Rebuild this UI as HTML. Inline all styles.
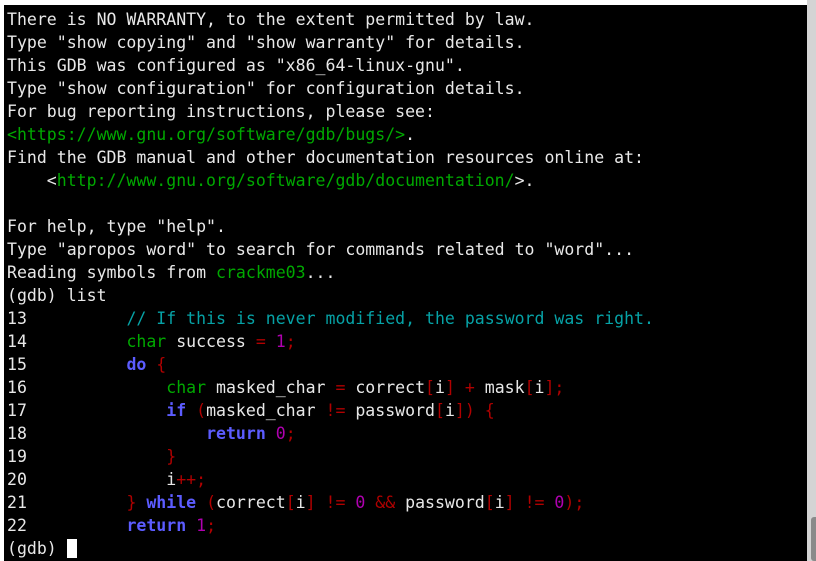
<!DOCTYPE html>
<html><head><meta charset="utf-8"><style>
html,body{margin:0;padding:0;width:816px;height:561px;background:#fff;overflow:hidden}
#t{position:absolute;left:4px;top:5px;width:803px;height:556px;background:#000}
#sb{position:absolute;left:807px;top:0;width:9px;height:561px;background:#d4d4d4}
#th{position:absolute;left:811px;top:517px;width:6px;height:44px;background:#8a8a8a;border-radius:3px 0 0 3px}
pre{position:absolute;left:7px;top:8px;margin:0;font-family:"DejaVu Sans Mono","Liberation Mono",monospace;font-size:16.55px;line-height:23px;color:#e8e8e8}
.g{color:#00a800}.c{color:#06a2a6}.k{color:#5c5cff;font-weight:bold}.n{color:#b000b0}.r{color:#b00000}
.cur{display:inline-block;width:10px;height:19px;background:#fff;vertical-align:-4px}
</style></head><body>
<div id="t"></div><div id="sb"></div><div id="th"></div>
<pre>There is NO WARRANTY, to the extent permitted by law.
Type "show copying" and "show warranty" for details.
This GDB was configured as "x86_64-linux-gnu".
Type "show configuration" for configuration details.
For bug reporting instructions, please see:
<span class="g">&lt;https://www.gnu.org/software/gdb/bugs/&gt;</span>.
Find the GDB manual and other documentation resources online at:
    &lt;<span class="g">http://www.gnu.org/software/gdb/documentation/</span>&gt;.

For help, type "help".
Type "apropos word" to search for commands related to "word"...
Reading symbols from <span class="g">crackme03</span>...
(gdb) list
13          <span class="c">// If this is never modified, the password was right.</span>
14          <span class="g">char</span> success <span class="r">=</span> <span class="n">1</span><span class="r">;</span>
15          <span class="k">do</span> <span class="r">{</span>
16              <span class="g">char</span> masked_char <span class="r">=</span> correct<span class="r">[</span>i<span class="r">]</span> <span class="r">+</span> mask<span class="r">[</span>i<span class="r">];</span>
17              <span class="k">if</span> <span class="r">(</span>masked_char <span class="r">!=</span> password<span class="r">[</span>i<span class="r">])</span> <span class="r">{</span>
18                  <span class="k">return</span> <span class="n">0</span><span class="r">;</span>
19              <span class="r">}</span>
20              i<span class="r">++;</span>
21          <span class="r">}</span> <span class="k">while</span> <span class="r">(</span>correct<span class="r">[</span>i<span class="r">]</span> <span class="r">!=</span> <span class="n">0</span> <span class="r">&amp;&amp;</span> password<span class="r">[</span>i<span class="r">]</span> <span class="r">!=</span> <span class="n">0</span><span class="r">);</span>
22          <span class="k">return</span> <span class="n">1</span><span class="r">;</span>
(gdb) <span class="cur"></span></pre>
</body></html>
